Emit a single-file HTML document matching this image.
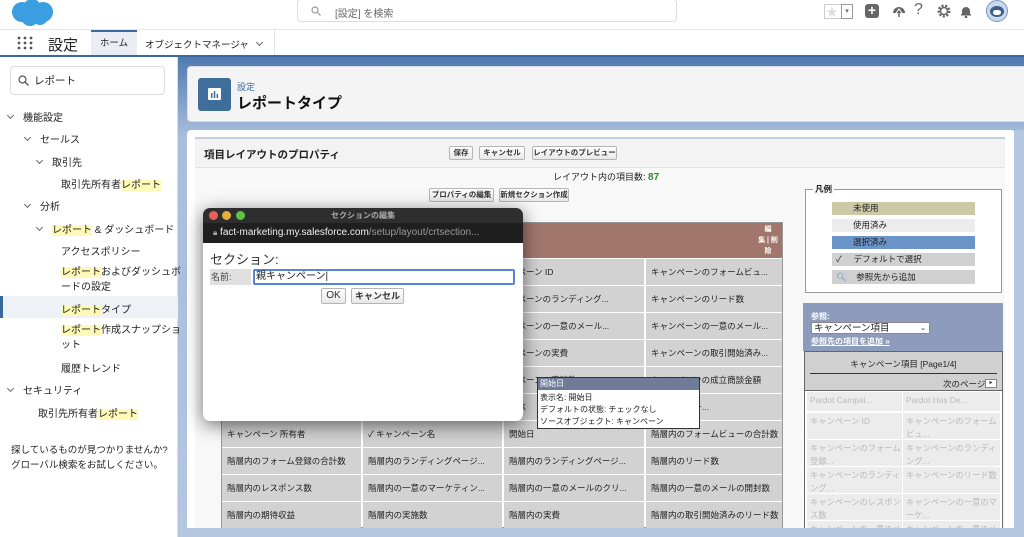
<!DOCTYPE html>
<html><head><meta charset="utf-8"><style>
*{box-sizing:border-box;margin:0;padding:0}
body{width:1024px;height:537px;overflow:hidden;position:relative;background:#fff;font-family:"Liberation Sans","Noto Sans CJK JP",sans-serif;color:#222;font-size:11px}
.a{position:absolute}
.hl{background:#fff9b8}
.btn{position:absolute;height:14px;border:1px solid #b5b5b5;border-radius:2px;background:linear-gradient(#fff,#e8e8e8);font-size:7.5px;font-weight:bold;line-height:12px;text-align:center;color:#333;white-space:nowrap;overflow:hidden}
.cell{position:absolute;background:#d2d2d2;font-size:9px;padding:10px 0 0 5px;height:26px;color:#222;white-space:nowrap;overflow:hidden}
.rc{position:absolute;background:#ececec;color:#b9b9b9;font-size:8.3px;padding:2px 3px;line-height:13px;overflow:hidden;white-space:nowrap}
.sb{position:absolute;white-space:nowrap;font-size:10px;color:#222}
.chev{display:inline-block;width:5px;height:5px;border-right:1px solid #666;border-bottom:1px solid #666;transform:rotate(45deg);margin-right:10px;position:relative;top:-3px}
</style></head><body>
<svg class="a" style="left:10px;top:0" width="44" height="27" viewBox="0 0 44 27"><g fill="#3b9ee0"><circle cx="12" cy="12" r="10"/><circle cx="22" cy="8" r="9"/><circle cx="33" cy="12" r="10"/><circle cx="20" cy="17" r="9"/><circle cx="30" cy="17" r="8"/></g></svg>
<div class="a" style="left:297px;top:-1px;width:380px;height:23px;border:1px solid #ddd;border-radius:4px;background:#fff"></div>
<svg class="a" style="left:311px;top:6px" width="10" height="10"><circle cx="4" cy="4" r="3" fill="none" stroke="#999" stroke-width="1.2"/><line x1="6.5" y1="6.5" x2="9.5" y2="9.5" stroke="#999" stroke-width="1.2"/></svg>
<div class="a" style="left:335px;top:5px;font-size:10px;color:#666">[設定] を検索</div>
<div class="a" style="left:824px;top:4px;width:29px;height:15px;border:1px solid #ccc;background:#fff"></div>
<div class="a" style="left:826px;top:3px;font-size:12px;color:#ddd">★</div>
<div class="a" style="left:841px;top:4px;width:12px;height:15px;border:1px solid #999;font-size:7px;text-align:center;line-height:13px;color:#666">▾</div>
<div class="a" style="left:865px;top:4px;width:14px;height:14px;background:#666;border-radius:3px;color:#fff;font-size:14px;line-height:13px;text-align:center;font-weight:bold">+</div>
<svg class="a" style="left:891px;top:4px" width="16" height="14"><path d="M2 9 A6 6 0 0 1 14 9 Z" fill="#666"/><path d="M5 9 L8 5 L11 9" stroke="#fff" fill="none"/><line x1="8" y1="9" x2="8" y2="13" stroke="#666" stroke-width="1.5"/></svg>
<div class="a" style="left:914px;top:1px;font-size:16px;color:#666">?</div>
<svg class="a" style="left:937px;top:4px" width="14" height="14"><circle cx="7" cy="7" r="5" fill="none" stroke="#666" stroke-width="3" stroke-dasharray="2 1.5"/><circle cx="7" cy="7" r="3.5" fill="none" stroke="#666" stroke-width="1.5"/></svg>
<svg class="a" style="left:959px;top:4px" width="14" height="14"><path d="M3 11 L3 7 A4 4 0 0 1 11 7 L11 11 Z" fill="#666"/><rect x="2" y="10" width="10" height="1.5" fill="#666"/><circle cx="7" cy="13" r="1.3" fill="#666"/></svg>
<div class="a" style="left:986px;top:0;width:22px;height:22px;border-radius:50%;background:#c9d8ee;border:1px solid #7a95bd"></div>
<div class="a" style="left:990px;top:6px;width:14px;height:11px;border-radius:50%;background:#3f5d8a"></div>
<div class="a" style="left:993px;top:10px;width:8px;height:5px;border-radius:40%;background:#fff"></div>
<div class="a" style="left:0;top:29px;width:1024px;height:1px;background:#e5e5e5"></div>
<svg class="a" style="left:17px;top:36px" width="16" height="14"><g fill="#555"><circle cx="2" cy="2" r="1.4"/><circle cx="8" cy="2" r="1.4"/><circle cx="14" cy="2" r="1.4"/><circle cx="2" cy="7" r="1.4"/><circle cx="8" cy="7" r="1.4"/><circle cx="14" cy="7" r="1.4"/><circle cx="2" cy="12" r="1.4"/><circle cx="8" cy="12" r="1.4"/><circle cx="14" cy="12" r="1.4"/></g></svg>
<div class="a" style="left:48px;top:34px;font-size:15px;color:#222">設定</div>
<div class="a" style="left:91px;top:30px;width:46px;height:26px;background:#eaeef4;border-top:2px solid #3a6a9a;font-size:9.5px;text-align:center;line-height:24px">ホーム</div>
<div class="a" style="left:145px;top:37px;font-size:9.5px">オブジェクトマネージャ</div>
<div class="a" style="left:257px;top:39px"><span class="chev"></span></div>
<div class="a" style="left:274px;top:30px;width:1px;height:26px;background:#e5e5e5"></div>
<div class="a" style="left:0;top:55px;width:1024px;height:2px;background:#3a6a9a"></div>
<div class="a" style="left:178px;top:57px;width:846px;height:480px;background:linear-gradient(#4f7ab0,#7d9cc6 40px,#a8bedc 80px,#b4c6e0)"></div>
<div class="a" style="left:0;top:57px;width:178px;height:480px;background:#fff;border-right:1px solid #ddd"></div>
<div class="a" style="left:10px;top:66px;width:155px;height:29px;border:1px solid #ddd;border-radius:4px"></div>
<svg class="a" style="left:18px;top:75px" width="11" height="11"><circle cx="4.5" cy="4.5" r="3.5" fill="none" stroke="#555" stroke-width="1.2"/><line x1="7" y1="7" x2="10.5" y2="10.5" stroke="#555" stroke-width="1.3"/></svg>
<div class="a" style="left:34px;top:73px;font-size:10.5px">レポート</div>
<div class="a" style="left:0;top:296px;width:178px;height:22px;background:#eef1f6;border-left:3px solid #3a6a9a"></div>
<div class="sb" style="left:8px;top:109px"><span class="chev"></span>機能設定</div>
<div class="sb" style="left:25px;top:131px"><span class="chev"></span>セールス</div>
<div class="sb" style="left:37px;top:154px"><span class="chev"></span>取引先</div>
<div class="sb" style="left:61px;top:176px">取引先所有者<span class="hl">レポート</span></div>
<div class="sb" style="left:25px;top:198px"><span class="chev"></span>分析</div>
<div class="sb" style="left:37px;top:221px"><span class="chev"></span><span class="hl">レポート</span> &amp; ダッシュボード</div>
<div class="sb" style="left:61px;top:243px">アクセスポリシー</div>
<div class="sb" style="left:61px;top:265px;line-height:15px"><span class="hl">レポート</span>およびダッシュボ<br>ードの設定</div>
<div class="sb" style="left:61px;top:301px"><span class="hl">レポート</span>タイプ</div>
<div class="sb" style="left:61px;top:323px;line-height:15px"><span class="hl">レポート</span>作成スナップショ<br>ット</div>
<div class="sb" style="left:61px;top:360px">履歴トレンド</div>
<div class="sb" style="left:8px;top:382px"><span class="chev"></span>セキュリティ</div>
<div class="sb" style="left:38px;top:405px">取引先所有者<span class="hl">レポート</span></div>
<div class="sb" style="left:11px;top:443px;line-height:15px;font-size:9.5px">探しているものが見つかりませんか?<br>グローバル検索をお試しください。</div>
<div class="a" style="left:187px;top:66px;width:850px;height:56px;background:#f4f4f4;border-radius:4px;border:1px solid #d8dde6"></div>
<div class="a" style="left:198px;top:78px;width:33px;height:33px;background:#3f6e9b;border-radius:3px"></div>
<div class="a" style="left:208px;top:88px;width:13px;height:12px;background:#fff;border-radius:1px"></div>
<svg class="a" style="left:208px;top:88px" width="13" height="12"><g fill="#3f6e9b"><rect x="3" y="5" width="1.5" height="5"/><rect x="5.8" y="3" width="1.5" height="7"/><rect x="8.6" y="6" width="1.5" height="4"/></g></svg>
<div class="a" style="left:237px;top:80px;font-size:9px;color:#3a6a9a">設定</div>
<div class="a" style="left:237px;top:92px;font-size:15px;font-weight:bold;color:#111">レポートタイプ</div>
<div class="a" style="left:187px;top:130px;width:828px;height:407px;background:#fff;border-radius:4px 4px 0 0"></div>
<div class="a" style="left:195px;top:137px;width:810px;height:400px;background:#f8f8f8;border-top:2px solid #c8ced8"></div>
<div class="a" style="left:195px;top:139px;width:810px;height:29px;background:#f3f3f3;border-bottom:1px solid #e3e3e3"></div>
<div class="a" style="left:204px;top:147px;font-size:10.5px;font-weight:bold">項目レイアウトのプロパティ</div>
<div class="btn" style="left:449px;top:146px;width:24px">保存</div>
<div class="btn" style="left:479px;top:146px;width:46px">キャンセル</div>
<div class="btn" style="left:532px;top:146px;width:85px">レイアウトのプレビュー</div>
<div class="a" style="left:553px;top:170px;font-size:9px">レイアウト内の項目数: <b style="color:#2a8a2a;font-size:10px">87</b></div>
<div class="btn" style="left:429px;top:188px;width:65px">プロパティの編集</div>
<div class="btn" style="left:499px;top:188px;width:70px">新規セクション作成</div>
<div class="a" style="left:221px;top:222px;width:562px;height:306px;background:#fff;border:1px solid #999"></div>
<div class="a" style="left:222px;top:223px;width:560px;height:35px;background:#a1776c"></div>
<div class="a" style="left:757px;top:224px;font-size:7px;font-weight:bold;color:#fff;width:22px;line-height:11px;text-align:center">編<br>集 | 削<br>除</div>
<div id="g"></div>
<div class="a" style="left:805px;top:189px;width:197px;height:104px;background:#fff;border:1px solid #999"></div>
<div class="a" style="left:813px;top:183px;background:#f8f8f8;font-size:8.5px;font-weight:bold;padding:0 2px">凡例</div>
<div class="a" style="left:832px;top:202px;width:143px;height:13px;background:#ccc9a6;font-size:8.5px;padding-left:21px;line-height:13px">未使用</div>
<div class="a" style="left:832px;top:219px;width:143px;height:13px;background:#ececec;font-size:8.5px;padding-left:21px;line-height:13px">使用済み</div>
<div class="a" style="left:832px;top:236px;width:143px;height:13px;background:#6b94c9;font-size:8.5px;padding-left:21px;line-height:13px">選択済み</div>
<div class="a" style="left:832px;top:253px;width:143px;height:13px;background:#d0d0d0;font-size:8.5px;padding-left:4px;line-height:13px">✓&nbsp;&nbsp;&nbsp;&nbsp;&nbsp;デフォルトで選択</div>
<div class="a" style="left:832px;top:270px;width:143px;height:14px;background:#d0d0d0;font-size:8.5px;padding-left:4px;line-height:14px"><span style="color:#5a8ac0">🔍︎</span>&nbsp;&nbsp;&nbsp;&nbsp;参照先から追加</div>
<div class="a" style="left:803px;top:303px;width:200px;height:48px;background:#8d9cbc"></div>
<div class="a" style="left:811px;top:311px;font-size:8px;font-weight:bold;color:#fff">参照:</div>
<div class="a" style="left:811px;top:322px;width:119px;height:12px;background:#fff;border:1px solid #888;font-size:9.5px;line-height:11px;padding-left:2px">キャンペーン項目<span style="float:right;font-size:7px;margin-right:3px">⌄</span></div>
<div class="a" style="left:811px;top:336px;font-size:8px;font-weight:bold;color:#fff;text-decoration:underline">参照先の項目を追加 »</div>
<div class="a" style="left:804px;top:351px;width:199px;height:40px;background:#d0d0d0;border:1px solid #666"></div>
<div class="a" style="left:804px;top:358px;width:199px;text-align:center;font-size:8.5px">キャンペーン項目 [Page1/4]</div>
<div class="a" style="left:810px;top:373px;width:187px;height:1px;background:#333"></div>
<div class="a" style="left:943px;top:378px;font-size:8.5px">次のページ</div>
<div class="a" style="left:985px;top:379px;width:12px;height:9px;background:#fff;border:1px solid #888;font-size:6px;text-align:center;line-height:7px">▸</div>
<div class="a" style="left:804px;top:391px;width:199px;height:137px;background:#fff;border-left:1px solid #666;border-right:1px solid #666"></div>
<div class="rc" style="left:807px;top:392px;width:95px;height:19px">Pardot Campai...</div>
<div class="rc" style="left:903px;top:392px;width:97px;height:19px">Pardot Has De...</div>
<div class="rc" style="left:807px;top:413px;width:95px;height:26px">キャンペーン ID</div>
<div class="rc" style="left:903px;top:413px;width:97px;height:26px">キャンペーンのフォーム<br>ビュ...</div>
<div class="rc" style="left:807px;top:440px;width:95px;height:26px">キャンペーンのフォーム<br>登録...</div>
<div class="rc" style="left:903px;top:440px;width:97px;height:26px">キャンペーンのランディ<br>ング...</div>
<div class="rc" style="left:807px;top:467px;width:95px;height:26px">キャンペーンのランディ<br>ング...</div>
<div class="rc" style="left:903px;top:467px;width:97px;height:26px">キャンペーンのリード数</div>
<div class="rc" style="left:807px;top:494px;width:95px;height:26px">キャンペーンのレスポン<br>ス数</div>
<div class="rc" style="left:903px;top:494px;width:97px;height:26px">キャンペーンの一意のマ<br>ーケ...</div>
<div class="rc" style="left:807px;top:521px;width:95px;height:7px">キャンペーンの一意のメ</div>
<div class="rc" style="left:903px;top:521px;width:97px;height:7px">キャンペーンの一意のメ</div>
<div class="a" style="left:178px;top:528px;width:846px;height:9px;background:#b4c6e0"></div>
<div class="a" style="left:1014px;top:130px;width:10px;height:400px;background:#b4c6e0"></div>
<div class="a" style="left:537px;top:377px;width:163px;height:52px;background:#fff;border:1px solid #333"></div>
<div class="a" style="left:538px;top:378px;width:161px;height:12px;background:#6f7c98;color:#fff;font-size:8px;line-height:12px;padding-left:2px">開始日</div>
<div class="a" style="left:540px;top:392px;font-size:8px;line-height:12px;white-space:nowrap">表示名: 開始日<br>デフォルトの状態: チェックなし<br>ソースオブジェクト: キャンペーン</div>
<div class="a" style="left:203px;top:208px;width:320px;height:213px;background:#fff;border-radius:7px;box-shadow:0 4px 18px rgba(0,0,0,.55);overflow:hidden">
 <div style="height:15px;background:#2e2e2e;position:relative">
  <span class="a" style="left:6px;top:3px;width:9px;height:9px;border-radius:50%;background:#ec5f57"></span>
  <span class="a" style="left:19px;top:3px;width:9px;height:9px;border-radius:50%;background:#e0b03a"></span>
  <span class="a" style="left:33px;top:3px;width:9px;height:9px;border-radius:50%;background:#5fc347"></span>
  <div class="a" style="left:0;width:320px;top:2px;text-align:center;color:#aaa;font-size:8px;font-weight:bold">セクションの編集</div>
 </div>
 <div style="height:20px;background:#1f1f1f;color:#eee;font-size:10px;line-height:20px;padding-left:10px;white-space:nowrap"><span style="color:#aaa;font-size:8px">🔒︎</span> fact-marketing.my.salesforce.com<span style="color:#999">/setup/layout/crtsection...</span></div>
 <div style="position:absolute;left:7px;top:41px;font-size:13px;color:#333">セクション:</div>
 <div style="position:absolute;left:7px;top:61px;width:41px;height:16px;background:#e0e0e0;font-size:9px;line-height:16px;padding-left:1px;color:#444">名前:</div>
 <div style="position:absolute;left:50px;top:61px;width:262px;height:16px;border:2px solid #5585d6;border-radius:2px;font-size:10px;line-height:12px;padding-left:1px">親キャンペーン|</div>
 <div class="btn" style="left:118px;top:80px;width:25px;height:16px;font-size:10px;line-height:14px;font-weight:normal">OK</div>
 <div class="btn" style="left:148px;top:80px;width:53px;height:16px;font-size:9px;line-height:14px">キャンセル</div>
</div>
<script>
var rows=[["","","ンペーン ID","キャンペーンのフォームビュ..."],["","","ンペーンのランディング...","キャンペーンのリード数"],["","","ンペーンの一意のメール...","キャンペーンの一意のメール..."],["","","ンペーンの実費","キャンペーンの取引開始済み..."],["","","ンペーンの商談数","キャンペーンの成立商談金額"],["","","ンペ","ンバーレコー..."],["キャンペーン 所有者","✓ キャンペーン名","開始日","階層内のフォームビューの合計数"],["階層内のフォーム登録の合計数","階層内のランディングページ...","階層内のランディングページ...","階層内のリード数"],["階層内のレスポンス数","階層内の一意のマーケティン...","階層内の一意のメールのクリ...","階層内の一意のメールの開封数"],["階層内の期待収益","階層内の実施数","階層内の実費","階層内の取引開始済みのリード数"]];
var xs=[222,363,504,646],ws=[139,139,140,136],h="";
rows.forEach(function(r,i){r.forEach(function(t,j){h+='<div class="cell" style="left:'+xs[j]+'px;top:'+(259+i*27)+'px;width:'+ws[j]+'px;padding-top:7px;font-size:8.5px">'+t+'</div>';});});
document.getElementById("g").outerHTML=h;
</script>
</body></html>
